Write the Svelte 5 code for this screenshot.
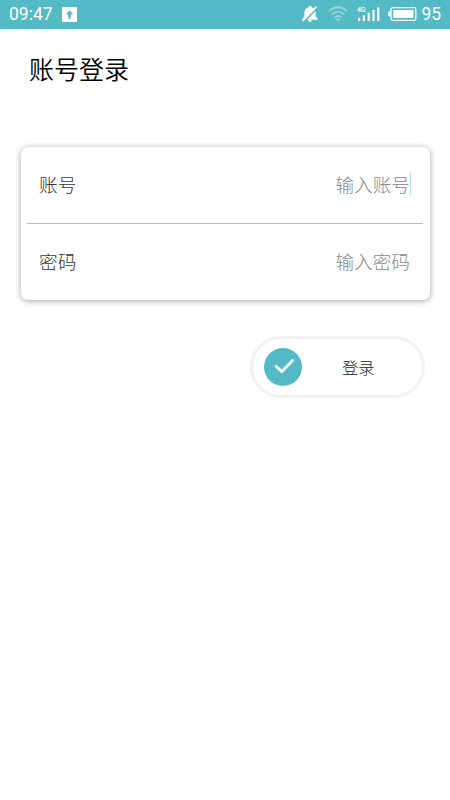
<script>
  const fields = [
    { label: '账号', placeholder: '输入账号', focused: true },
    { label: '密码', placeholder: '输入密码', focused: false },
  ];
  const time = '09:47';
  const battery = 95;
</script>

<div class="screen">
  <header class="status">
    <span class="time">{time}</span>
    <svg class="upload" width="15" height="15" viewBox="0 0 15 15">
      <rect width="15" height="15" fill="#fff" />
      <path d="M7.5 3.2 11.2 7.3H8.8V11.5H6.2V7.3H3.8Z" fill="#54bac5" />
    </svg>
    <svg class="bell" width="18" height="18" viewBox="0 0 18 18">
      <path d="M1.4 13.8 3.4 11.2V7.6C3.4 4.6 5 2.8 7.6 2.2V1H10.4V2.2C13 2.8 14.6 4.6 14.6 7.6V11.2L16.8 13.8V14.8H1.4ZM7 15.2H11Q10.4 17 9 17T7 15.2Z" fill="#fff" />
      <path d="M2.6 17.2 16.6 2.6" stroke="#54bac5" stroke-width="1.7" />
      <path d="M1.6 16 15.4 1.6" stroke="#fff" stroke-width="1.6" />
    </svg>
    <svg class="wifi" width="20" height="16" viewBox="0 0 20 16">
      <g fill="none" stroke="#fff" stroke-width="1.9" opacity="0.38">
        <path d="M1 5Q10-2.4 19 5" />
        <path d="M3.8 8.4Q10 3.2 16.2 8.4" />
        <path d="M6.5 11.6Q10 8.6 13.5 11.6" />
      </g>
      <path d="M7.8 13.4Q10 11.8 12.2 13.4L10 15.8Z" fill="#fff" opacity="0.38" />
    </svg>
    <svg class="signal" width="24" height="16" viewBox="0 0 24 16">
      <text x="0" y="6" fill="#fff" font-size="7" font-weight="500" textLength="8.5">4G</text>
      <g fill="#fff">
        <rect x="1" y="11.8" width="2.2" height="3.2" />
        <rect x="5.8" y="9.3" width="2.2" height="5.7" />
        <rect x="10.6" y="6.6" width="2.2" height="8.4" />
        <rect x="15.4" y="4" width="2.2" height="11" />
        <rect x="20.2" y="1.4" width="2.2" height="13.6" />
      </g>
    </svg>
    <svg class="cell" width="29" height="14" viewBox="0 0 29 14">
      <rect x="3" y="0.7" width="24.8" height="12.6" rx="1.8" fill="none" stroke="#fff" stroke-width="1.3" />
      <rect x="5.3" y="3" width="20.2" height="8" fill="#fff" />
      <rect x="0.2" y="4.4" width="2.4" height="5.2" rx="0.8" fill="#fff" />
    </svg>
    <span class="percent">{battery}</span>
  </header>

  <main>
    <h1>账号登录</h1>

    <form class="card">
      {#each fields as field}
        <label class="row">
          <span class="label">{field.label}</span>
          <span class="value" class:focused={field.focused}>{field.placeholder}</span>
        </label>
      {/each}
    </form>

    <button class="submit" type="button">
      <span class="badge">
        <svg width="38" height="38" viewBox="0 0 38 38">
          <path d="M12 18.2 17.8 23.6 28.6 12.6" fill="none" stroke="#fff" stroke-width="2.8" stroke-linecap="round" />
        </svg>
      </span>
      <span class="submit-text">登录</span>
    </button>
  </main>
</div>

<style>
  :global(body) { background: #fff; }
  .screen {
    width: 450px; height: 800px;
    overflow: hidden;
    background: #fff;
    font-family: "Noto Sans CJK SC", sans-serif;
  }
  .status {
    display: flex; align-items: center;
    box-sizing: border-box;
    height: 29px;
    padding: 0 8.5px 1px 9px;
    background: #54bac5;
    color: #fff;
    font-family: Roboto, sans-serif;
    font-size: 17.5px;
    line-height: 28px;
  }
  .status svg { display: block; flex: none; }
  .time { width: 53px; }
  .bell { margin-left: auto; }
  .wifi { margin-left: 9px; }
  .signal { margin-left: 8.5px; }
  .cell { margin-left: 7.5px; }
  .percent { width: 20px; margin-left: 4.5px; }
  main {
    display: flex; flex-direction: column;
    padding: 0 20px;
  }
  h1 {
    margin: 21px 0 0 9px;
    font-size: 25px; font-weight: 350;
    line-height: 36px;
    color: #000;
  }
  .card {
    box-sizing: border-box;
    width: 409px; height: 153px;
    margin: 61px 0 0 1px;
    padding: 0 7px 0 6px;
    border-radius: 7px;
    background: #fff;
    box-shadow: 0 1px 6px rgba(0, 0, 0, 0.36);
  }
  .row {
    display: flex; align-items: center; justify-content: space-between;
    box-sizing: border-box;
    height: 76px;
    padding: 0 12px 2px;
    font-size: 18.67px; font-weight: 300;
    line-height: 28px;
  }
  .row + .row {
    height: 77px;
    border-top: 1px solid #bbb;
  }
  .label { color: #333; }
  .value {
    padding-right: 1px;
    color: #888;
  }
  /* text caret of the active field */
  .focused {
    margin-top: -2px;
    padding-right: 0;
    border-right: 1px solid #b5dfe4;
    line-height: 23px;
  }
  .submit {
    display: flex; align-items: center;
    box-sizing: border-box;
    width: 175px; height: 62px;
    margin: 36px 0 0 230px;
    padding: 0 0 0 11px;
    border: 3px solid #f2f2f2;
    border-radius: 31px;
    background: #fff;
    font-family: inherit;
  }
  .badge {
    width: 38px; height: 38px;
    border-radius: 50%;
    background: #54bac5;
  }
  .badge svg { display: block; }
  .submit-text {
    margin-left: 40px;
    font-size: 16.3px; font-weight: 300;
    line-height: 24px;
    color: #222;
  }
</style>
